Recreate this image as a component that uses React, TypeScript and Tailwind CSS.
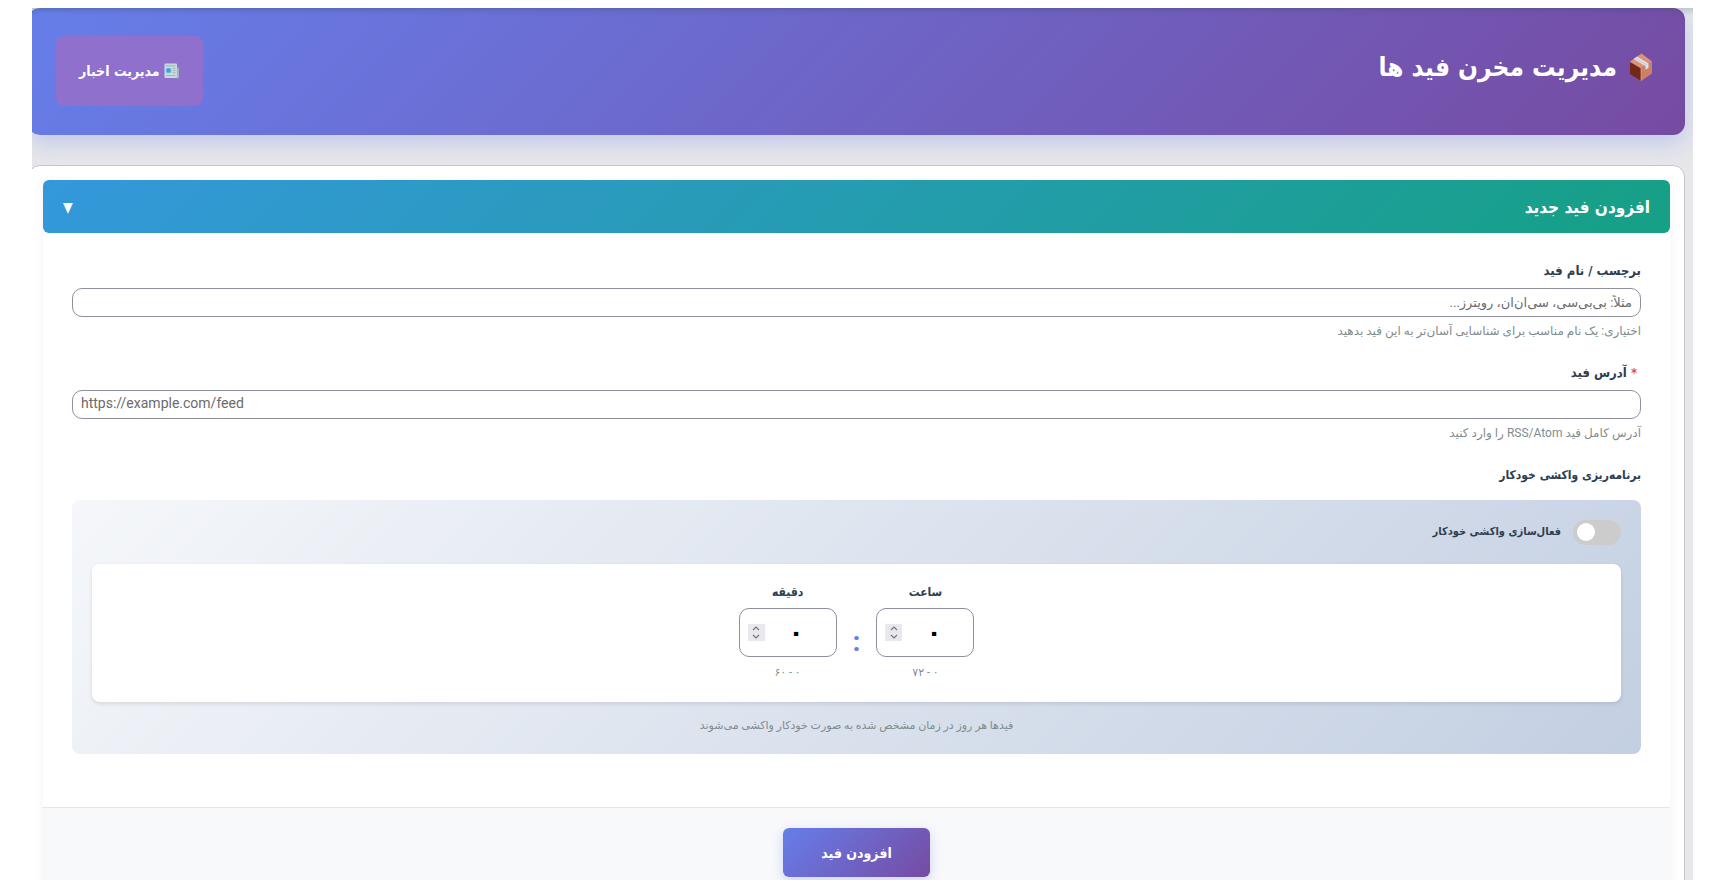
import React, { useState } from 'react';

const PERSIAN_DIGITS = '۰۱۲۳۴۵۶۷۸۹';

const toPersian = (n: number) => String(n).replace(/\d/g, (d) => PERSIAN_DIGITS[Number(d)]);

const fromPersian = (text: string) =>
  Number(text.replace(/[۰-۹]/g, (d) => String(PERSIAN_DIGITS.indexOf(d))).replace(/\D/g, ''));

function PackageIcon() {
  return (
    <svg viewBox="0 0 24 28" className="w-6 h-7" aria-hidden="true">
      <path d="M1 8.500 12 15V28L1 21Z" fill="#74281a" />
      <path d="M12 15 23 8.500V20.500L12 28Z" fill="#cf7f66" />
      <path d="M1 8.500 12.500 0.500 23 8.500 12 15Z" fill="#dd9278" />
      <path d="M4.500 6 8 3.500 19.500 10.500V15L16.500 16.500V13Z" fill="#d9e3ea" />
      <path d="M6 5 18 12" stroke="#b4c3cf" strokeWidth="0.800" fill="none" />
      <path d="M1 8.500 12 15V28" stroke="#e0a08a" strokeWidth="0.700" fill="none" />
    </svg>
  );
}

function NewspaperIcon() {
  return (
    <svg viewBox="0 0 16 16" className="w-4 h-4" aria-hidden="true">
      <path d="M12 4.500h3v9a1.500 1.500 0 0 1-3 1Z" fill="#a4afc0" />
      <rect x="0.500" y="0.500" width="12.500" height="14.500" rx="1.200" fill="#c9dadf" />
      <path d="M2 2.800h9.500" stroke="#a2b9c2" strokeWidth="1.200" />
      <rect x="2" y="5" width="5.500" height="5" fill="#8fc6e0" />
      <circle cx="4.500" cy="7.500" r="2.200" fill="#42a0da" />
      <path d="M9 5.500h2.500M9 7.500h2.500M9 9.500h2.500M2 12.500h9.500" stroke="#a3bdaa" strokeWidth="1" />
    </svg>
  );
}

interface TimeFieldProps {
  id: string;
  label: string;
  max: number;
}

function TimeField({ id, label, max }: TimeFieldProps) {
  const [value, setValue] = useState(0);
  const update = (n: number) => setValue(Math.min(max, Math.max(0, n)));

  return (
    <div className="flex flex-col items-center">
      <label htmlFor={id} className="mb-1.5 font-['DejaVu_Sans_Condensed','DejaVu_Sans',sans-serif] text-xs leading-5 font-bold text-[#2c3e50]">
        {label}
      </label>
      <div className="flex items-center w-[98px] h-[49px] px-2 border border-[#8f8f9d] rounded-[10px] bg-white">
        <input
          id={id}
          type="text"
          inputMode="numeric"
          value={toPersian(value)}
          onChange={(e) => update(fromPersian(e.target.value))}
          className="flex-1 min-w-0 text-center text-2xl font-bold text-black outline-none"
        />
        <div className="flex flex-col w-[17px] h-[17px] bg-[#e9e9ed] text-[#75757d]">
          <button type="button" aria-label={`افزایش ${label}`} onClick={() => update(value + 1)} className="flex-1 flex items-center justify-center">
            <svg viewBox="0 0 8 5" className="w-2 h-[5px]" fill="none" stroke="currentColor" strokeWidth="1.200">
              <path d="M1 4l3-3 3 3" />
            </svg>
          </button>
          <button type="button" aria-label={`کاهش ${label}`} onClick={() => update(value - 1)} className="flex-1 flex items-center justify-center">
            <svg viewBox="0 0 8 5" className="w-2 h-[5px]" fill="none" stroke="currentColor" strokeWidth="1.200">
              <path d="M1 1l3 3 3-3" />
            </svg>
          </button>
        </div>
      </div>
      <span className="mt-2 text-[11px] leading-4 text-[#7f8c8d]">
        {toPersian(0)} - {toPersian(max)}
      </span>
    </div>
  );
}

export default function App() {
  const [open, setOpen] = useState(true);
  const [autoFetch, setAutoFetch] = useState(false);

  return (
    <div dir="rtl" lang="fa" className="h-screen px-8 py-2 overflow-hidden bg-white font-['Roboto','DejaVu_Sans',sans-serif]">
      <div className="h-full overflow-hidden bg-[linear-gradient(180deg,#c3c9d3_0px,#e7e7ea_8px)]">
        <header className="flex items-start justify-between -ml-1 mr-2 h-[127px] pr-8 pl-7 rounded-xl bg-[linear-gradient(135deg,#667eea_0%,#764ba2_100%)] font-['DejaVu_Sans_Condensed','DejaVu_Sans',sans-serif] shadow-[0_8px_25px_rgba(102,126,234,0.3),inset_0_6px_6px_-5px_rgba(60,80,110,0.5)]">
          <h1 className="flex items-center gap-3 pt-[39px] text-[26px] leading-10 font-bold text-white">
            <PackageIcon />
            مدیریت مخرن فید ها
          </h1>
          <a href="#news" className="flex items-center gap-1 mt-7 h-[70px] px-[23px] rounded-lg bg-[#8f70cd] text-sm font-bold text-white">
            <NewspaperIcon />
            مدیریت اخبار
          </a>
        </header>

        <main className="-ml-1 mr-2 mt-[30px] pt-[14px] px-[14px] rounded-xl border border-[#c4c4c6] bg-white">
          <section className="bg-white shadow-[0_2px_10px_rgba(0,0,0,0.06)]">
            <h2>
              <button
                type="button"
                aria-expanded={open}
                onClick={() => setOpen(!open)}
                className="flex items-center justify-between w-full h-[53px] px-5 rounded-md bg-[linear-gradient(135deg,#3498db_0%,#16a085_100%)] font-['DejaVu_Sans_Condensed','DejaVu_Sans',sans-serif] text-[17px] leading-6 font-bold text-white"
              >
                <span>افزودن فید جدید</span>
                <span className="text-sm">▼</span>
              </button>
            </h2>

            {open && (
              <form onSubmit={(e) => e.preventDefault()}>
                <div className="px-[29px] pt-7 pb-[53px]">
                  <div className="mb-6">
                    <label htmlFor="feed-name" className="block mb-[7px] font-['DejaVu_Sans_Condensed','DejaVu_Sans',sans-serif] text-[13px] leading-5 font-bold text-[#2c3e50]">
                      برچسب / نام فید
                    </label>
                    <input
                      id="feed-name"
                      type="text"
                      placeholder="مثلاً: بی‌بی‌سی، سی‌ان‌ان، رویترز..."
                      className="block w-full h-[29px] px-2 border border-[#8f8f9d] rounded-[10px] text-[13px] placeholder:text-[#6b6b6b]"
                    />
                    <p className="mt-1.5 text-xs leading-4 text-[#7f8c8d]">
                      اختیاری: یک نام مناسب برای شناسایی آسان‌تر به این فید بدهید
                    </p>
                  </div>

                  <div className="mb-6">
                    <label htmlFor="feed-url" className="block mb-[7px] pr-1 font-['DejaVu_Sans_Condensed','DejaVu_Sans',sans-serif] text-[13px] leading-5 font-bold text-[#2c3e50]">
                      <span className="text-[#e74c3c]">*</span> آدرس فید
                    </label>
                    <input
                      id="feed-url"
                      type="url"
                      dir="ltr"
                      placeholder="https://example.com/feed"
                      className="block w-full h-[29px] px-2 pb-1 border border-[#8f8f9d] rounded-[10px] text-sm placeholder:text-[#6b6b6b]"
                    />
                    <p className="mt-1.5 text-xs leading-4 text-[#7f8c8d]">آدرس کامل فید RSS/Atom را وارد کنید</p>
                  </div>

                  <fieldset>
                    <legend className="mb-[15px] font-['DejaVu_Sans_Condensed','DejaVu_Sans',sans-serif] text-xs leading-5 font-bold text-[#2c3e50]">برنامه‌ریزی واکشی خودکار</legend>
                    <div className="p-5 rounded-lg bg-[linear-gradient(135deg,#f5f7fa_0%,#c3cfe2_100%)]">
                      <label className="flex items-center gap-3 mb-5 h-6 cursor-pointer font-['DejaVu_Sans_Condensed','DejaVu_Sans',sans-serif] text-[11px] font-bold text-[#2c3e50]">
                        <input
                          type="checkbox"
                          checked={autoFetch}
                          onChange={(e) => setAutoFetch(e.target.checked)}
                          className="peer sr-only"
                        />
                        <span className="flex items-center justify-end w-12 h-[25px] px-1 rounded-full bg-[#cccccc] peer-checked:bg-[#667eea] peer-checked:justify-start">
                          <span className="size-[18px] rounded-full bg-white" />
                        </span>
                        فعال‌سازی واکشی خودکار
                      </label>

                      <div className="flex justify-center gap-4 pt-[18px] pb-[21px] rounded-lg bg-white shadow-[0_2px_4px_rgba(0,0,0,0.1)]">
                        <TimeField id="hours" label="ساعت" max={72} />
                        <span className="pt-10 text-[28px] leading-10 font-bold text-[#667eea]">:</span>
                        <TimeField id="minutes" label="دقیقه" max={60} />
                      </div>

                      <p className="mt-4 text-center text-[11px] leading-4 text-[#7f8c8d]">
                        فیدها هر روز در زمان مشخص شده به صورت خودکار واکشی می‌شوند
                      </p>
                    </div>
                  </fieldset>
                </div>

                <div className="flex justify-center py-5 border-t border-[#e1e8e8] bg-[#f8f9fb]">
                  <button
                    type="submit"
                    className="h-[49px] px-[38px] rounded-md bg-[linear-gradient(135deg,#667eea_0%,#764ba2_100%)] font-['DejaVu_Sans_Condensed','DejaVu_Sans',sans-serif] text-sm font-bold text-white shadow-[0_4px_12px_rgba(102,126,234,0.3)]"
                  >
                    افزودن فید
                  </button>
                </div>
              </form>
            )}
          </section>
        </main>
      </div>
    </div>
  );
}
